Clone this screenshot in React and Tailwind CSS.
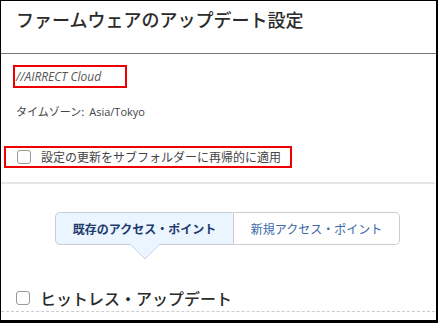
export default function App() {
  const jp = { fontFamily: '"Noto Sans CJK JP", "Noto Sans", sans-serif' };
  return (
    <div className="w-[438px] h-[323px] bg-white overflow-hidden" style={jp}>
      <div className="w-[438px] h-[323px] border-l border-t border-black border-r-2 border-b-[3px] flex flex-col">
        <div className="h-[53px] border-b border-[#777] pl-[15px] pt-[5px] shrink-0">
          <div className="text-[18px] leading-[26px] font-medium text-[#2b2b2b]">ファームウェアのアップデート設定</div>
        </div>
        <div className="ml-[12px] mt-[11px] w-[114px] h-[23px] border-2 border-[#e00] flex items-center pl-[1px]">
          <span className="text-[12px] italic text-[#555]" style={{ fontFamily: '"Open Sans", "Noto Sans", sans-serif' }}>//AIRRECT Cloud</span>
        </div>
        <div className="ml-[15px] mt-[15px] text-[11px] leading-[16px] text-[#444]">
          タイムゾーン:&nbsp; <span style={{ fontFamily: '"Open Sans", "Noto Sans", sans-serif' }}>Asia/Tokyo</span>
        </div>
        <div className="ml-[3px] mt-[26px] w-[288px] h-[22px] border-2 border-[#e00] flex items-center pl-[11px]">
          <span className="w-[14px] h-[14px] rounded-[3px] border border-[#999] bg-white shrink-0" />
          <span className="ml-[10px] text-[12px] text-[#444] leading-[16px]">設定の更新をサブフォルダーに再帰的に適用</span>
        </div>
        <div className="mt-[14px] h-[2px] w-[434px] bg-[#e6e6e6] shrink-0" />
        <div className="mt-[28px] ml-[54px] flex">
          <div className="relative w-[179px] h-[33px] border border-[#c9ced6] rounded-l-[5px] bg-[#ebf5ff] flex items-center justify-center text-[12px] font-bold text-[#1f3b6e]">
            既存のアクセス・ポイント
            <svg className="absolute left-[74px] top-[31px]" width="30" height="16" viewBox="0 0 30 16">
              <polygon points="0,0 30,0 15,15" fill="#ebf5ff" />
              <polyline points="0,0 15,15 30,0" fill="none" stroke="#c9d6e8" strokeWidth="1" />
            </svg>
          </div>
          <div className="w-[166px] h-[33px] border border-l-0 border-[#c9ced6] rounded-r-[5px] bg-white flex items-center justify-center text-[12px] text-[#3a68a8]">
            新規アクセス・ポイント
          </div>
        </div>
        <div className="mt-[43px] ml-[15px] flex items-center">
          <span className="w-[14px] h-[14px] rounded-[3px] border border-[#999] bg-white shrink-0" />
          <span className="ml-[10px] text-[16px] leading-[20px] font-medium text-[#2b2b2b]">ヒットレス・アップデート</span>
        </div>
        <div className="mt-[3px] w-[434px] border-t border-dashed border-[#ccc]" />
      </div>
    </div>
  );
}
